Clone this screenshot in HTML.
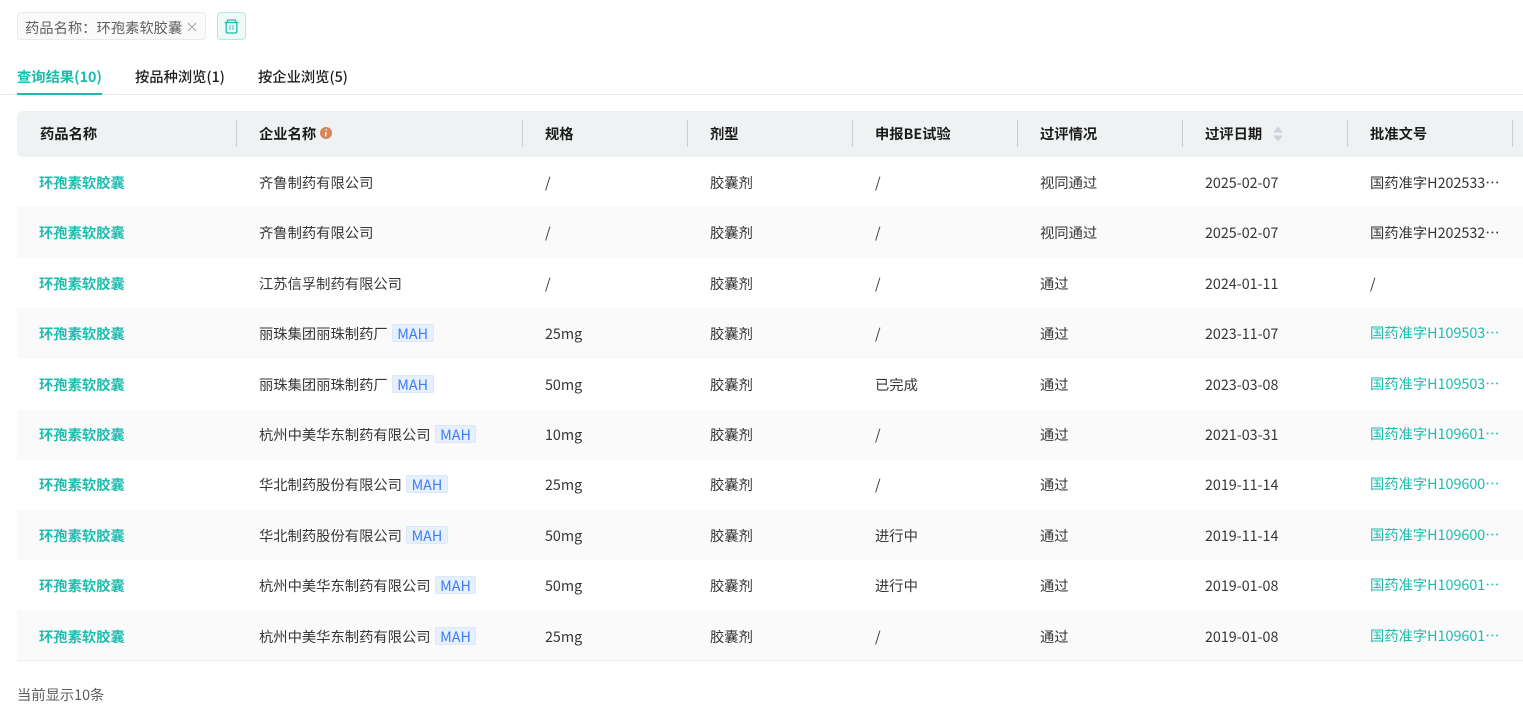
<!DOCTYPE html>
<html lang="zh"><head><meta charset="utf-8"><style>
*{box-sizing:border-box}
html,body{margin:0;padding:0;background:#fff;width:1523px;height:709px;overflow:hidden;font-family:"Noto Sans CJK SC","Liberation Sans",sans-serif;font-size:14.3px;color:#333}
.a{position:absolute;white-space:nowrap}
.tag{left:17px;top:12px;width:189px;height:28px;border:1px solid #e8eaec;border-radius:4px;background:#fafafa;color:#5f5f5f;line-height:29px;padding-left:7px}
.del{left:217px;top:12px;width:29px;height:28px;border:1px solid #b4e8e2;border-radius:4px;background:#eefaf8}
.tab{top:66px;line-height:22px;font-weight:500;color:#1c1c1c}
.line{left:0;top:94px;width:1523px;height:1px;background:#e9e9ef}
.ink{left:17px;top:93px;width:85px;height:2px;background:#1dbcae}
.head{left:17px;top:111px;width:1506px;height:46px;background:#eff2f3;border-radius:6px 0 0 6px}
.th{top:124px;line-height:20px;font-weight:700;color:#1c1c1c}
.sep{top:120px;width:1px;height:27px;background:#c6d0d0}
.row{left:17px;width:1506px}
.row.e{background:#fafafa}
.c{line-height:20px;color:#363636}
.n{left:39px;font-weight:700;color:#1dbcae}
.g{color:#1dbcae}
.m{display:inline-block;height:18px;line-height:17px;padding:0 4.6px;margin-left:4px;background:#e6effc;border:1px solid #dbe7fa;border-radius:2px;color:#3f7cf5;vertical-align:0}
</style></head><body>
<div class="a tag">药品名称：环孢素软胶囊</div>
<svg class="a" style="left:187px;top:22px" width="10" height="10" viewBox="0 0 10 10"><path d="M1 1L9 9M9 1L1 9" stroke="#aaa" stroke-width="1.1" fill="none"/></svg>
<div class="a del"></div>
<svg class="a" style="left:224px;top:19px" width="15" height="15" viewBox="0 0 15 15" fill="none" stroke="#1dbcae" stroke-width="1.3"><path d="M0.5 3.5H14.5M3 3.5L3.6 1H11.4L12 3.5M2.2 3.5V12.5Q2.2 14 3.7 14H11.3Q12.8 14 12.8 12.5V3.5"/><path d="M6 6V11M9 6V11" stroke-width="1.6" stroke="#7fdbd2"/></svg>

<div class="a tab" style="left:17px;color:#1dbcae;font-weight:700">查询结果(10)</div>
<div class="a tab" style="left:135px">按品种浏览(1)</div>
<div class="a tab" style="left:258px">按企业浏览(5)</div>
<div class="a line"></div><div class="a ink"></div>

<div class="a head"></div>
<div class="a th" style="left:40px">药品名称</div>
<div class="a th" style="left:259px">企业名称</div>
<svg class="a" style="left:320px;top:127px" width="12" height="12" viewBox="0 0 12 12"><circle cx="6" cy="6" r="6" fill="#d4855c"/><path d="M6.4 2.4L6.2 3.6M6 5L5.6 9.4" stroke="#fff" stroke-width="1.3"/></svg>
<div class="a th" style="left:545px">规格</div>
<div class="a th" style="left:710px">剂型</div>
<div class="a th" style="left:875px">申报BE试验</div>
<div class="a th" style="left:1040px">过评情况</div>
<div class="a th" style="left:1205px">过评日期</div>
<svg class="a" style="left:1272px;top:126px" width="12" height="16" viewBox="0 0 12 16"><path d="M6 0.5L11 6.5H1Z M6 15.5L1 9.5H11Z" fill="#cfd2da"/></svg>
<div class="a th" style="left:1370px">批准文号</div>
<div class="a sep" style="left:236px"></div><div class="a sep" style="left:522px"></div><div class="a sep" style="left:687px"></div><div class="a sep" style="left:852px"></div><div class="a sep" style="left:1017px"></div><div class="a sep" style="left:1182px"></div><div class="a sep" style="left:1347px"></div><div class="a sep" style="left:1512px"></div>

<div class="a row e" style="top:207px;height:51px"></div>
<div class="a row e" style="top:308px;height:51px"></div>
<div class="a row e" style="top:410px;height:50px"></div>
<div class="a row e" style="top:510px;height:50px"></div>
<div class="a row e" style="top:611px;height:49px"></div>
<div class="a" style="left:17px;top:660px;width:1506px;height:1px;background:#ebedf0"></div>

<!-- 1 -->
<div class="a c n" style="top:173px">环孢素软胶囊</div><div class="a c" style="left:259px;top:173px">齐鲁制药有限公司</div><div class="a c" style="left:545px;top:173px">/</div><div class="a c" style="left:710px;top:173px">胶囊剂</div><div class="a c" style="left:875px;top:173px">/</div><div class="a c" style="left:1040px;top:173px">视同通过</div><div class="a c" style="left:1205px;top:173px">2025-02-07</div><div class="a c" style="left:1370px;top:173px">国药准字H202533…</div>
<!-- 2 -->
<div class="a c n" style="top:223px">环孢素软胶囊</div><div class="a c" style="left:259px;top:223px">齐鲁制药有限公司</div><div class="a c" style="left:545px;top:223px">/</div><div class="a c" style="left:710px;top:223px">胶囊剂</div><div class="a c" style="left:875px;top:223px">/</div><div class="a c" style="left:1040px;top:223px">视同通过</div><div class="a c" style="left:1205px;top:223px">2025-02-07</div><div class="a c" style="left:1370px;top:223px">国药准字H202532…</div>
<!-- 3 -->
<div class="a c n" style="top:274px">环孢素软胶囊</div><div class="a c" style="left:259px;top:274px">江苏信孚制药有限公司</div><div class="a c" style="left:545px;top:274px">/</div><div class="a c" style="left:710px;top:274px">胶囊剂</div><div class="a c" style="left:875px;top:274px">/</div><div class="a c" style="left:1040px;top:274px">通过</div><div class="a c" style="left:1205px;top:274px">2024-01-11</div><div class="a c" style="left:1370px;top:274px">/</div>
<!-- 4 -->
<div class="a c n" style="top:324px">环孢素软胶囊</div><div class="a c" style="left:259px;top:324px">丽珠集团丽珠制药厂<span class="m">MAH</span></div><div class="a c" style="left:545px;top:324px">25mg</div><div class="a c" style="left:710px;top:324px">胶囊剂</div><div class="a c" style="left:875px;top:324px">/</div><div class="a c" style="left:1040px;top:324px">通过</div><div class="a c" style="left:1205px;top:324px">2023-11-07</div><div class="a c g" style="left:1370px;top:323px">国药准字H109503…</div>
<!-- 5 -->
<div class="a c n" style="top:375px">环孢素软胶囊</div><div class="a c" style="left:259px;top:375px">丽珠集团丽珠制药厂<span class="m">MAH</span></div><div class="a c" style="left:545px;top:375px">50mg</div><div class="a c" style="left:710px;top:375px">胶囊剂</div><div class="a c" style="left:875px;top:375px">已完成</div><div class="a c" style="left:1040px;top:375px">通过</div><div class="a c" style="left:1205px;top:375px">2023-03-08</div><div class="a c g" style="left:1370px;top:374px">国药准字H109503…</div>
<!-- 6 -->
<div class="a c n" style="top:425px">环孢素软胶囊</div><div class="a c" style="left:259px;top:425px">杭州中美华东制药有限公司<span class="m">MAH</span></div><div class="a c" style="left:545px;top:425px">10mg</div><div class="a c" style="left:710px;top:425px">胶囊剂</div><div class="a c" style="left:875px;top:425px">/</div><div class="a c" style="left:1040px;top:425px">通过</div><div class="a c" style="left:1205px;top:425px">2021-03-31</div><div class="a c g" style="left:1370px;top:424px">国药准字H109601…</div>
<!-- 7 -->
<div class="a c n" style="top:475px">环孢素软胶囊</div><div class="a c" style="left:259px;top:475px">华北制药股份有限公司<span class="m">MAH</span></div><div class="a c" style="left:545px;top:475px">25mg</div><div class="a c" style="left:710px;top:475px">胶囊剂</div><div class="a c" style="left:875px;top:475px">/</div><div class="a c" style="left:1040px;top:475px">通过</div><div class="a c" style="left:1205px;top:475px">2019-11-14</div><div class="a c g" style="left:1370px;top:474px">国药准字H109600…</div>
<!-- 8 -->
<div class="a c n" style="top:526px">环孢素软胶囊</div><div class="a c" style="left:259px;top:526px">华北制药股份有限公司<span class="m">MAH</span></div><div class="a c" style="left:545px;top:526px">50mg</div><div class="a c" style="left:710px;top:526px">胶囊剂</div><div class="a c" style="left:875px;top:526px">进行中</div><div class="a c" style="left:1040px;top:526px">通过</div><div class="a c" style="left:1205px;top:526px">2019-11-14</div><div class="a c g" style="left:1370px;top:525px">国药准字H109600…</div>
<!-- 9 -->
<div class="a c n" style="top:576px">环孢素软胶囊</div><div class="a c" style="left:259px;top:576px">杭州中美华东制药有限公司<span class="m">MAH</span></div><div class="a c" style="left:545px;top:576px">50mg</div><div class="a c" style="left:710px;top:576px">胶囊剂</div><div class="a c" style="left:875px;top:576px">进行中</div><div class="a c" style="left:1040px;top:576px">通过</div><div class="a c" style="left:1205px;top:576px">2019-01-08</div><div class="a c g" style="left:1370px;top:575px">国药准字H109601…</div>
<!-- 10 -->
<div class="a c n" style="top:627px">环孢素软胶囊</div><div class="a c" style="left:259px;top:627px">杭州中美华东制药有限公司<span class="m">MAH</span></div><div class="a c" style="left:545px;top:627px">25mg</div><div class="a c" style="left:710px;top:627px">胶囊剂</div><div class="a c" style="left:875px;top:627px">/</div><div class="a c" style="left:1040px;top:627px">通过</div><div class="a c" style="left:1205px;top:627px">2019-01-08</div><div class="a c g" style="left:1370px;top:626px">国药准字H109601…</div>

<div class="a" style="left:17px;top:684px;line-height:21px;color:#5f5f5f">当前显示10条</div>
</body></html>
